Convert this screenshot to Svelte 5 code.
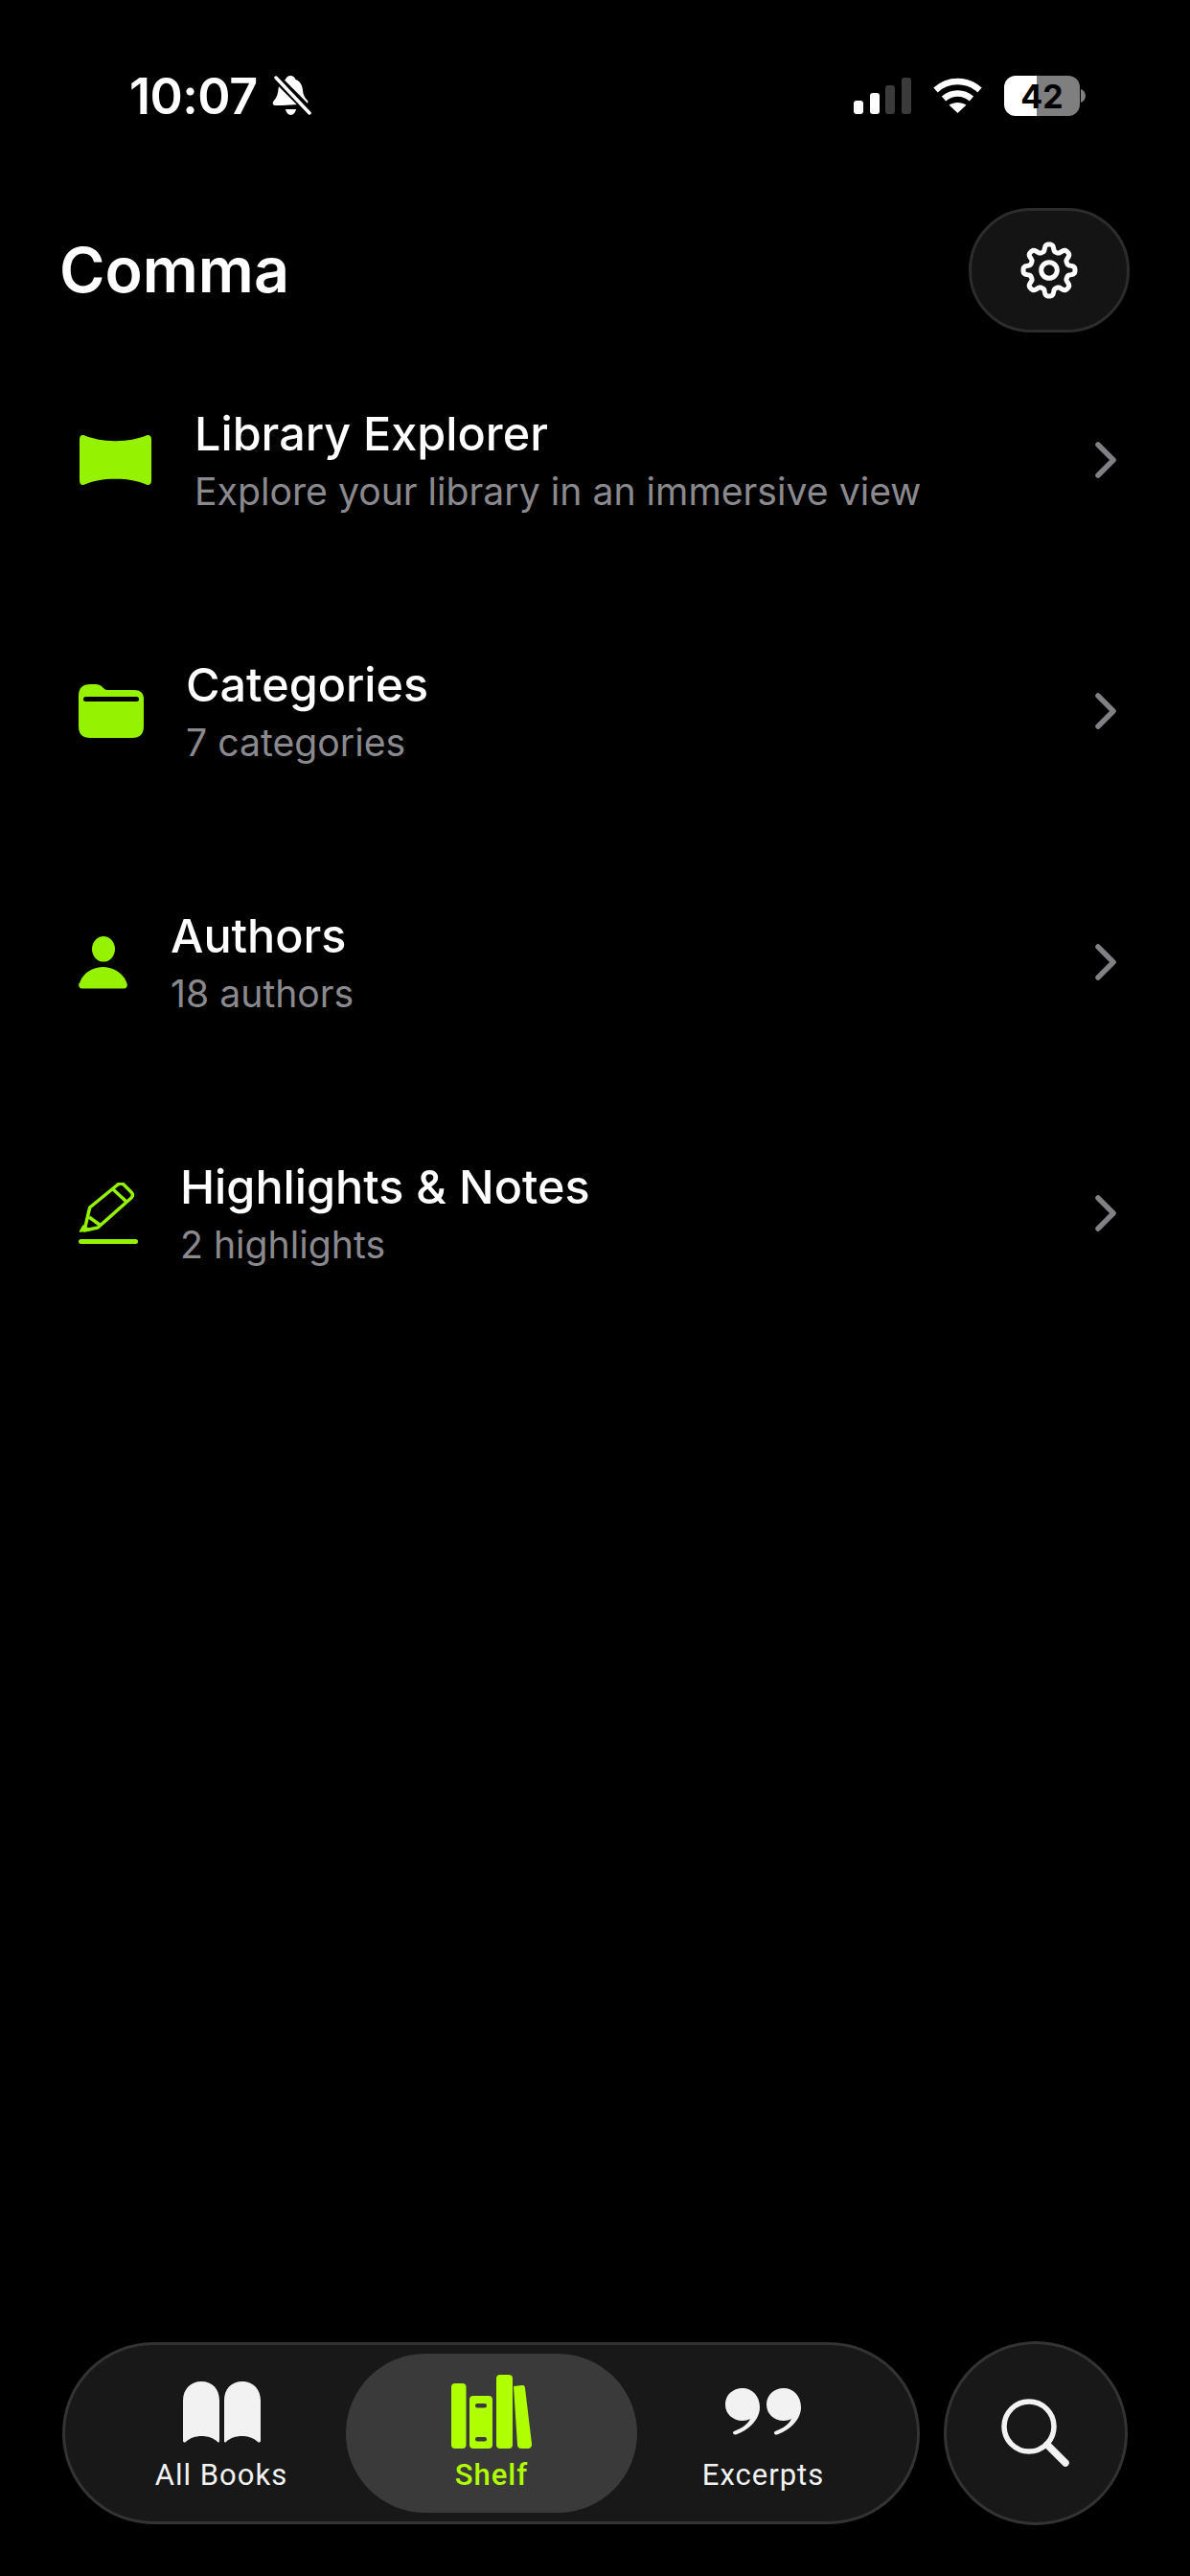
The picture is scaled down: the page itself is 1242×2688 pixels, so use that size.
<script lang="ts">
  const rows = [
    { icon: 'explorer', title: 'Library Explorer', sub: 'Explore your library in an immersive view' },
    { icon: 'folder', title: 'Categories', sub: '7 categories' },
    { icon: 'person', title: 'Authors', sub: '18 authors' },
    { icon: 'pencil', title: 'Highlights & Notes', sub: '2 highlights' }
  ];

  // eight rounded teeth, walked around the centre
  function gearPath() {
    const pts = [];
    for (let i = 0; i < 160; i++) {
      const a = (i / 160) * Math.PI * 2;
      const wave = Math.tanh(2 * Math.cos(8 * a)) / Math.tanh(2);
      const r = 23.5 + 3.5 * wave;
      pts.push(`${(32 + r * Math.cos(a)).toFixed(2)} ${(32 + r * Math.sin(a)).toFixed(2)}`);
    }
    return 'M' + pts.join('L') + 'Z';
  }
  const gear = gearPath();
</script>

<div class="screen">
  <header class="status">
    <div class="left">
      <span class="time">10:07</span>
      <svg class="bell" width="42" height="44" viewBox="0 0 42 44" fill="none">
        <path d="M20 1c3 0 5 2 5.500 4 5 2 7 6 7.500 11 .3 5 2 8 5 11 1 1.500.5 3-1 3.500L11 32H3.500C1.500 31.500 1 29 2.500 27.500 6 24 7 20 7.500 15 8 10 11 6.500 15 5c.5-2 2.500-4 5-4z" fill="#fff"/>
        <path d="M15 36h11c-.5 3-3 6-5.500 6s-5-3-5.500-6z" fill="#fff"/>
        <path d="M3 1 42 40" stroke="#000" stroke-width="9"/>
        <path d="M5 3 40 40" stroke="#fff" stroke-width="3.500" stroke-linecap="round"/>
      </svg>
    </div>
    <div class="right">
      <div class="signal">
        <i class="on s1"></i><i class="on s2"></i><i class="s3"></i><i class="s4"></i>
      </div>
      <svg class="wifi" width="53" height="38" viewBox="0 0 52 38" fill="none" stroke="#fff" stroke-width="6.500">
        <path d="M3 13C16 1 36 1 49 13"/>
        <path d="M11.500 22C20 14.500 32 14.500 40.500 22"/>
        <path d="M26 37 17 28.500C22 25 30 25 35 28.500z" fill="#fff" stroke="none"/>
      </svg>
      <div class="battery">
        <div class="cell"><span>42</span></div>
        <svg class="cap" width="5" height="14" viewBox="0 0 5 14"><path d="M0 0c3 1 5 4 5 7s-2 6-5 7z" fill="#7f7f7f"/></svg>
      </div>
    </div>
  </header>

  <div class="topbar">
    <h1>Comma</h1>
    <button class="settings" aria-label="Settings">
      <svg width="64" height="64" viewBox="0 0 64 64" fill="none" stroke="#fff" stroke-width="5" stroke-linejoin="round">
        <path d={gear}/>
        <circle cx="32" cy="32" r="8.300"/>
      </svg>
    </button>
  </div>

  <ul class="list">
    {#each rows as row}
      <li class="row">
        {#if row.icon === 'explorer'}
          <svg width="77" height="54" viewBox="0 0 78 54"><path d="M6 1c10 4 20 6 33 6s23-2 33-6c3-1 5 1 5 4v44c0 3-2 5-5 4-10-4-20-6-33-6S16 49 6 53c-3 1-5-1-5-4V5c0-3 2-5 5-4z" fill="#95f200"/></svg>
        {:else if row.icon === 'folder'}
          <svg width="68" height="56" viewBox="0 0 68 56">
            <path d="M0 12C0 4 4 0 12 0h4c6 0 7 1 10 4 2 2 3 2 6 2h26c6 0 10 3 10 9v29c0 8-4 12-12 12H12C4 56 0 52 0 44z" fill="#95f200"/>
            <rect x="5" y="13" width="58" height="5" rx="2.500" fill="#000"/>
          </svg>
        {:else if row.icon === 'person'}
          <svg width="52" height="55" viewBox="0 0 52 55">
            <ellipse cx="26" cy="13.300" rx="12" ry="13.300" fill="#95f200"/>
            <path d="M1 49C4 39 14 32 25.500 32S47 39 50.500 49c1 3-.5 5.500-3 5.500h-44C1 54.500-.5 52 .5 49z" fill="#95f200"/>
          </svg>
        {:else}
          <svg width="62" height="64" viewBox="0 0 62 64" fill="none" stroke="#95f200" stroke-width="3.500" stroke-linejoin="round">
            <path d="M41 2c2-1.500 4-1.500 6 0l8 8c2 2 2 4 0 6L20 47 6 50l5.700-24z"/>
            <path d="M36 7 50 20M11 36l11 8"/>
            <path d="M5 45 1.500 51 12 49.500z" fill="#95f200" stroke-width="1.500"/>
            <path d="M2.500 61.500h57" stroke-width="5" stroke-linecap="round"/>
          </svg>
        {/if}
        <div class="text">
          <div class="title">{row.title}</div>
          <div class="sub">{row.sub}</div>
        </div>
        <svg class="chev" width="26" height="38" viewBox="0 0 26 38" fill="none" stroke="#808085" stroke-width="5.500" stroke-linecap="round" stroke-linejoin="round"><path d="M5 3 21 19 5 35"/></svg>
      </li>
    {/each}
  </ul>

  <nav class="bottom">
    <div class="tabs">
      <div class="tab books">
        <div class="slot">
          <svg width="81" height="64" viewBox="0 0 81 64" fill="#f2f2f2">
            <path d="M0 20C0 8 8 0 19 0c12 0 19 8 19 20v42c0 1.500-1 2-2 1C28 55 11 55 3 63c-1 1-3 .5-3-1z"/>
            <path d="M81 20C81 8 73 0 62 0 50 0 43 8 43 20v42c0 1.500 1 2 2 1 8-8 25-8 33 0 1 1 3 .5 3-1z"/>
          </svg>
        </div>
        <span>All Books</span>
      </div>
      <div class="tab active">
        <div class="slot">
          <svg width="86" height="78" viewBox="0 0 86 78" fill="#b0ff00">
            <rect x="1" y="9" width="15.500" height="68" rx="4"/>
            <rect x="20" y="22" width="24" height="55" rx="4"/>
            <rect x="48" y="0" width="17" height="77" rx="4"/>
            <path d="M66 12l9-1c2-.5 3 1 3 3l7 58c.5 3-1 5-4 5h-7c-3 0-4-2-4-4z"/>
            <rect x="26" y="30" width="12" height="4.500" rx="2.200" fill="#3a3a3a"/>
            <rect x="26" y="65" width="12" height="4.500" rx="2.200" fill="#3a3a3a"/>
          </svg>
        </div>
        <span>Shelf</span>
      </div>
      <div class="tab excerpts">
        <div class="slot">
          <svg width="79" height="50" viewBox="0 0 79 50" fill="#f2f2f2">
            <path d="M18 0c10 0 18 8 18 20 0 13-12 24-25 28.500-3 .5-4-2.500-2-3.500 8-3 14-7 17-13-2 1-5 2-8 2C8 34 0 27 0 17 0 7 8 0 18 0z"/>
            <path d="M61 0c10 0 18 8 18 20 0 13-12 24-25 28.500-3 .5-4-2.500-2-3.500 8-3 14-7 17-13-2 1-5 2-8 2-10 0-18-7-18-17C43 7 51 0 61 0z"/>
          </svg>
        </div>
        <span>Excerpts</span>
      </div>
    </div>
    <button class="search" aria-label="Search">
      <svg width="72" height="72" viewBox="0 0 72 72" fill="none" stroke="#f2f2f2" stroke-linecap="round">
        <circle cx="29" cy="29" r="26" stroke-width="5.500"/>
        <path d="M48 48 67 67" stroke-width="7.500"/>
      </svg>
    </button>
  </nav>
</div>

<style>
  :global(body) {
    margin: 0;
    background: #000;
  }
  .screen {
    width: 1242px;
    height: 2688px;
    background: #000;
    color: #fff;
    display: flex;
    flex-direction: column;
    font-family: Inter, "Liberation Sans", sans-serif;
  }
  .status {
    display: flex;
    justify-content: space-between;
    align-items: center;
    height: 100px;
    padding: 0 109px 0 135px;
    margin-top: 50px;
    box-sizing: border-box;
  }
  .left {
    display: flex;
    align-items: center;
    gap: 14px;
  }
  .time {
    font-size: 52px;
    font-weight: 600;
    letter-spacing: -0.5px;
  }
  .right {
    display: flex;
    align-items: center;
    gap: 22px;
  }
  .signal {
    display: flex;
    align-items: flex-end;
    gap: 6.6px;
    height: 38px;
  }
  .signal i {
    width: 10px;
    border-radius: 3px;
    background: #3a3a3a;
  }
  .signal i.on {
    background: #fff;
  }
  .s1 { height: 14px; }
  .s2 { height: 22px; }
  .s3 { height: 30px; }
  .s4 { height: 38px; }
  .battery {
    display: flex;
    align-items: center;
    gap: 1px;
  }
  .cell {
    width: 79px;
    height: 42px;
    border-radius: 12px;
    background: linear-gradient(to right, #fff 0 43%, #7f7f7f 43% 100%);
    color: #000;
    display: flex;
    align-items: center;
    justify-content: center;
    font-size: 34px;
    font-weight: 700;
  }
  .topbar {
    display: flex;
    justify-content: space-between;
    align-items: center;
    padding: 0 63px 0 62px;
    margin-top: 67px;
  }
  h1 {
    margin: 0;
    font-size: 64.5px;
    font-weight: 600;
  }
  .settings {
    width: 168px;
    height: 130px;
    border-radius: 65px;
    background: #141414;
    border: 3px solid #2c2c2c;
    padding: 0;
    display: flex;
    align-items: center;
    justify-content: center;
  }
  .list {
    list-style: none;
    margin: 73px 0 0;
    padding: 0;
    display: flex;
    flex-direction: column;
    gap: 142px;
  }
  .row {
    display: flex;
    align-items: center;
    gap: 44px;
    height: 120px;
    padding: 0 75px 0 82px;
  }
  .text {
    flex: 1;
    padding-top: 5px;
  }
  .title {
    font-size: 48.5px;
    font-weight: 450;
    line-height: 60px;
  }
  .sub {
    font-size: 39.2px;
    line-height: 60px;
    color: #8a8a8e;
  }
  .bottom {
    margin-top: auto;
    margin-bottom: 53px;
    padding: 0 65px;
    display: flex;
    justify-content: space-between;
    align-items: center;
  }
  .tabs {
    width: 895px;
    height: 190px;
    box-sizing: border-box;
    border-radius: 95px;
    background: #181818;
    border: 3px solid #333;
    display: grid;
    grid-template-columns: 284px 304px 1fr;
    align-items: center;
    padding: 9px;
  }
  .tab {
    display: flex;
    flex-direction: column;
    align-items: center;
    box-sizing: border-box;
    height: 166px;
    padding-top: 22px;
    border-radius: 83px;
    gap: 7px;
    color: #f2f2f2;
  }
  .tab.books {
    padding-left: 24px;
  }
  .tab.excerpts {
    padding-right: 20px;
  }
  .slot {
    height: 78px;
    display: flex;
    align-items: center;
  }
  .tab span {
    font-family: Roboto, sans-serif;
    font-size: 31px;
    line-height: 40px;
    letter-spacing: 1px;
  }
  .tab.active {
    background: #3a3a3a;
    color: #b0ff00;
  }
  .tab.active span {
    font-weight: 500;
  }
  .search {
    width: 192px;
    height: 192px;
    border-radius: 50%;
    background: #181818;
    border: 3px solid #333;
    padding: 0;
    display: flex;
    align-items: center;
    justify-content: center;
  }
</style>
